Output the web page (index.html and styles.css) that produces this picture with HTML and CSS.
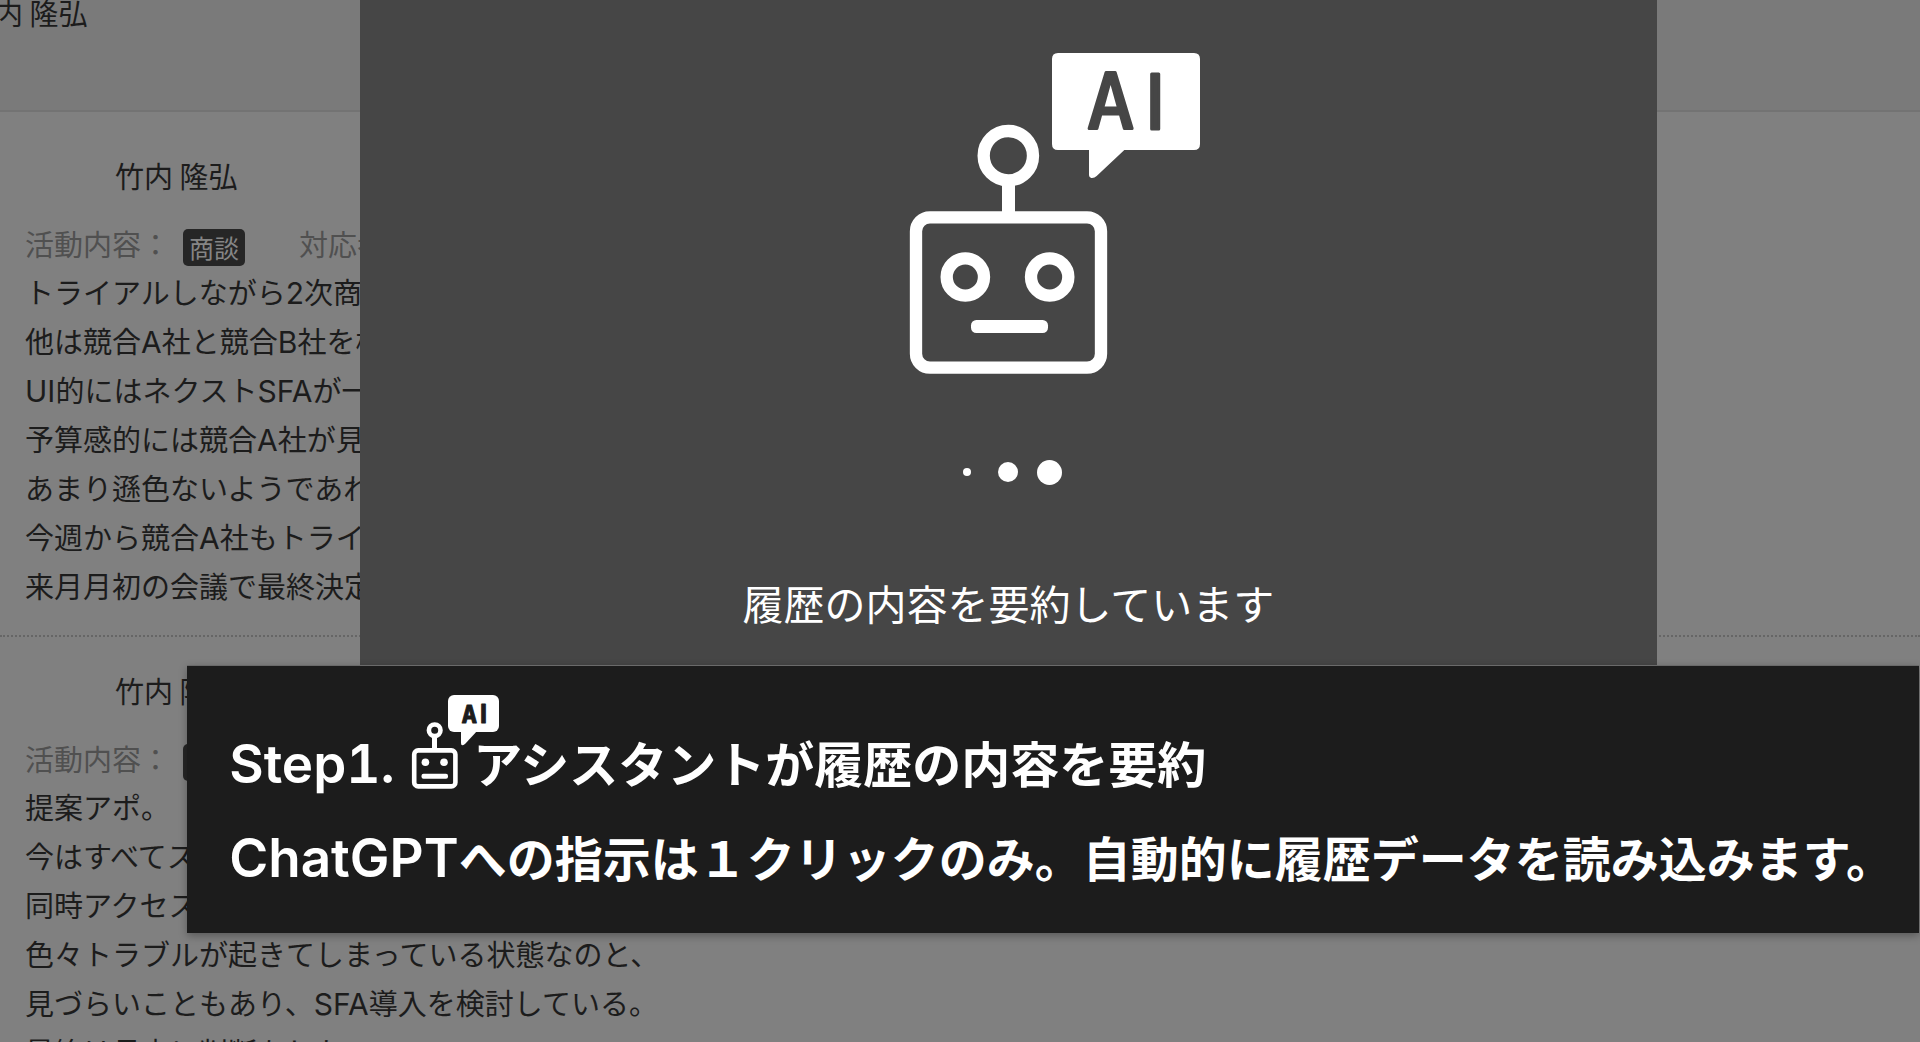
FILE: index.html
```html
<!DOCTYPE html>
<html lang="ja">
<head>
<meta charset="utf-8">
<title>活動履歴</title>
<link rel="stylesheet" href="styles.css">
</head>
<body>
<main class="history">
  <header class="history-header"><p class="owner">竹内 隆弘</p></header>

  <article class="record">
    <h2 class="name">竹内 隆弘</h2>
    <div class="meta"><span>活動内容：</span><span class="badge">商談</span><span>対応者</span></div>
    <p class="line">トライアルしながら<span class="latin">2</span>次商談</p>
    <p class="line">他は競合<span class="latin">A</span>社と競合<span class="latin">B</span>社を検討</p>
    <p class="line"><span class="latin">UI</span>的にはネクスト<span class="latin">SFA</span>が一番</p>
    <p class="line">予算感的には競合<span class="latin">A</span>社が見合う</p>
    <p class="line">あまり遜色ないようであれば</p>
    <p class="line">今週から競合<span class="latin">A</span>社もトライアル</p>
    <p class="line">来月月初の会議で最終決定</p>
  </article>

  <article class="record">
    <h2 class="name">竹内 隆弘</h2>
    <div class="meta"><span>活動内容：</span><span class="badge">商談</span></div>
    <p class="line">提案アポ。</p>
    <p class="line">今はすべてス</p>
    <p class="line">同時アクセス</p>
    <p class="line">色々トラブルが起きてしまっている状態なのと、</p>
    <p class="line">見づらいこともあり、<span class="latin">SFA</span>導入を検討している。</p>
    <p class="line">最終は月内に判断をしたい</p>
  </article>
</main>

<section class="modal" role="status">
  <svg class="robot" viewBox="-189 69 1149 963" aria-hidden="true">
    <circle cx="385" cy="377" r="74" class="stroke-large"/>
    <rect x="366" y="460" width="39" height="90" class="fill"/>
    <rect x="108" y="562" width="555" height="451" rx="42" class="stroke-large"/>
    <circle cx="256" cy="741" r="56" class="stroke-large"/>
    <circle cx="509" cy="741" r="56" class="stroke-large"/>
    <rect x="273" y="870" width="231" height="39" rx="16" class="fill"/>
    <path class="fill" d="M534 69H942Q960 69 960 87V342Q960 360 942 360H733L650 438Q643 445 634 444Q627 443 627 436V360H534Q516 360 516 342V87Q516 69 534 69Z"/>
    <g class="logo-text logo-text-large">
      <text x="692" y="296" class="logo-a">A</text>
      <text x="826" y="296" class="logo-i">I</text>
    </g>
  </svg>
  <div class="dots" aria-hidden="true"><i class="dot dot-small"></i><i class="dot dot-medium"></i><i class="dot dot-large"></i></div>
  <p class="message">履歴の内容を要約しています</p>
</section>

<section class="caption">
  <p class="step">
    <span class="caption-latin step-number">Step1.</span>
    <svg class="robot-small" viewBox="412 694 62 96" aria-hidden="true">
      <circle cx="435.7" cy="730.3" r="5.8" class="stroke-small"/>
      <rect x="433" y="737" width="5" height="13" class="fill"/>
      <rect x="415.2" y="750.4" width="41.2" height="36" rx="4" class="stroke-small"/>
      <circle cx="426.4" cy="762.2" r="3.8" class="fill"/>
      <circle cx="445" cy="762.2" r="3.8" class="fill"/>
      <rect x="422.5" y="773.8" width="26.5" height="5" rx="2" class="fill"/>
      <rect x="449" y="695" width="51" height="37" rx="6" class="fill"/>
      <path class="fill" d="M462 730H479L466 744Q462 747 462 743Z"/>
      <g class="logo-text logo-text-small">
        <text x="470.3" y="722.5" class="logo-a">A</text>
        <text x="484.5" y="722.5" class="logo-i">I</text>
      </g>
    </svg>
    <span class="step-title">アシスタントが履歴の内容を要約</span>
  </p>
  <p class="detail"><span class="caption-latin">ChatGPT</span>への指示は１クリックのみ。自動的に履歴データを読み込みます。</p>
</section>
</body>
</html>
```
FILE: styles.css
```css
* { box-sizing: border-box; }
body, p, h2 { margin: 0; }

body {
  position: relative;
  height: 100vh;
  overflow: hidden;
  background: #808080;
  color: #1c1c1c;
  font-family: "Noto Sans CJK JP", sans-serif;
  font-size: 29px;
  line-height: 49px;
}

/* History list behind the overlay */
.history { height: 100vh; overflow: hidden; }
.history-header {
  height: 112px;
  background: #7a7a7a;
  border-bottom: 2px solid #737373;
}
.owner { margin-left: -35px; line-height: 24px; }
.record {
  padding: 39px 25px 25px;
  border-bottom: 2px dotted #666;
  white-space: nowrap;
}
.record + .record { padding-top: 29px; }
.name {
  padding-left: 90px;
  margin-bottom: 20px;
  font-size: 29px;
  font-weight: 400;
}
.meta {
  display: flex;
  align-items: center;
  height: 47px;
  color: #505050;
}
.badge {
  margin: 8px 54px 0 13px;
  padding: 0 6px;
  border-radius: 5px;
  background: #262626;
  color: #858585;
  font-size: 25px;
  line-height: 37px;
}
.latin { font-family: Inter, sans-serif; font-size: 30px; line-height: 1; }

/* Progress dialog */
.modal {
  position: absolute;
  top: 0;
  left: 18.75%;
  right: 13.7%;
  height: 665px;
  padding-top: 53px;
  display: flex;
  flex-direction: column;
  align-items: center;
  background: #464646;
  color: #fff;
}
.robot { width: 383px; height: 321px; }
.dots {
  display: grid;
  grid-template-columns: repeat(3, 41px);
  place-items: center;
  height: 26px;
  margin: 85px 0 93px;
}
.dot { border-radius: 50%; background: #fff; }
.dot-small { width: 8px; height: 8px; }
.dot-medium { width: 20px; height: 20px; }
.dot-large { width: 25px; height: 25px; }
.message { font-size: 41px; line-height: 48px; }

/* Caption banner */
.caption {
  position: absolute;
  top: 665px;
  left: 9.75%;
  right: 1px;
  padding: 28px 0 41px 42px;
  border-top: 1px solid #6a6a6a;
  background: #1c1c1c;
  box-shadow: 0 3px 8px rgba(0, 0, 0, 0.3);
  color: #fff;
  font-size: 48px;
  font-weight: 600;
  white-space: nowrap;
}
.step {
  display: flex;
  align-items: baseline;
  margin-bottom: 29px;
  font-size: 49px;
  line-height: 48px;
}
.detail { line-height: 72px; }
.caption-latin { font-family: Inter, sans-serif; font-size: 53px; line-height: 1; }
.step-number { width: 182px; padding-top: 44px; font-variant-numeric: tabular-nums; }
.step-title { padding-top: 44px; }
.robot-small { width: 62px; height: 96px; align-self: flex-start; overflow: visible; }

/* Robot artwork */
.fill { fill: #fff; }
.stroke-large { fill: none; stroke: #fff; stroke-width: 37; }
.stroke-small { fill: none; stroke: #fff; stroke-width: 4.6; }
.logo-text { text-anchor: middle; stroke-linejoin: round; }
.logo-a { font-family: "DejaVu Sans Mono", monospace; }
.logo-i { font-family: Inter, sans-serif; }
.logo-text-large {
  font-size: 228px;
  font-weight: 400;
  fill: #464646;
  stroke: #464646;
  stroke-width: 9;
}
.logo-text-small {
  font-size: 25px;
  font-weight: 700;
  fill: #1c1c1c;
  stroke: #1c1c1c;
  stroke-width: 1;
}
```
